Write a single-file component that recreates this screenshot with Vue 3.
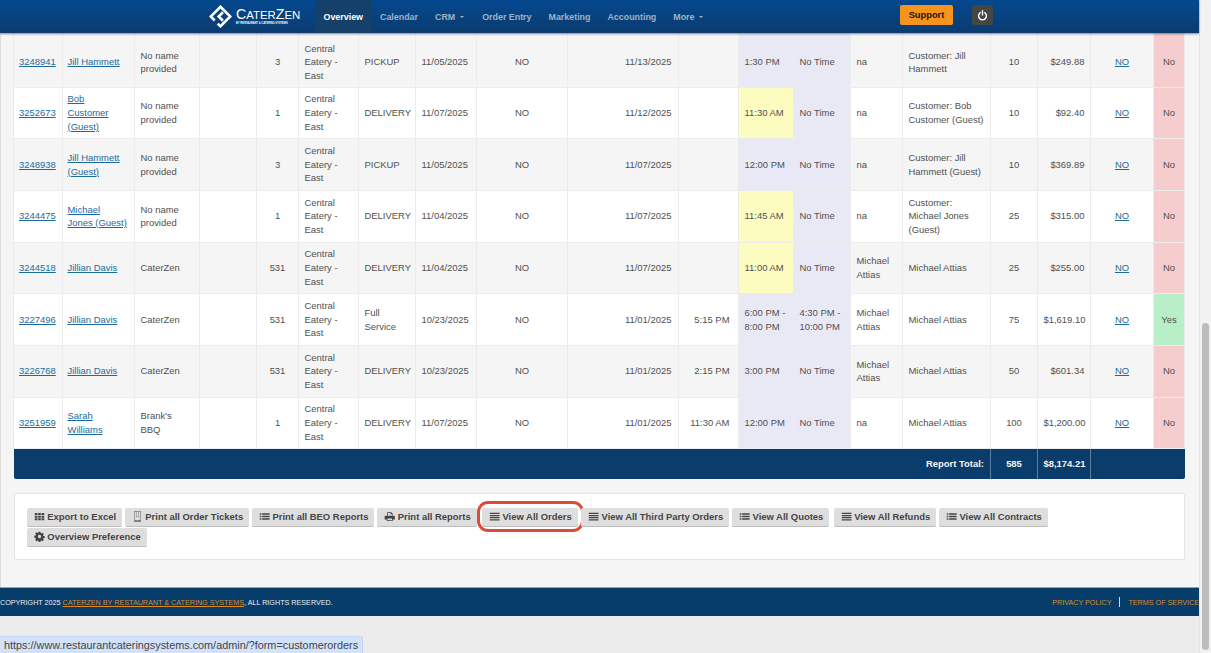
<script setup>
const icons = {
  th: 'M1 2.5h3.4v2.6H1zM5.3 2.5h3.4v2.6H5.3zM9.6 2.5H13v2.6H9.6zM1 5.9h3.4v2.6H1zM5.3 5.9h3.4v2.6H5.3zM9.6 5.9H13v2.6H9.6zM1 9.3h3.4v2.6H1zM5.3 9.3h3.4v2.6H5.3zM9.6 9.3H13v2.6H9.6z',
  tablet: 'M2.8 0h8.4v14H2.8zM3.6.8v10.6h6.8V.8zM6.2 12v1.2h1.6V12zM5 2h1.2v1.2H5zM7.8 2H9v1.2H7.8zM5 4.4h1.2v1.2H5zM7.8 4.4H9v1.2H7.8zM5 6.8h1.2V8H5zM7.8 6.8H9V8H7.8z',
  list: 'M1 3h2v1.8H1zM4 3h9.5v1.8H4zM1 6.1h2v1.8H1zM4 6.1h9.5v1.8H4zM1 9.2h2V11H1zM4 9.2h9.5V11H4z',
  bars: 'M1 2.3h12.4v1.6H1zM1 5h12.4v1.6H1zM1 7.7h12.4v1.6H1zM1 10.4h12.4V12H1z',
  print: 'M4 1.5h5.2L11 3.3v3H10V4H8.4V2.5H5v3.8H4zM1.8 6.2h11a1 1 0 0 1 1 1v3.6h-2.6v2H3.4v-2H.8V7.2a1 1 0 0 1 1-1zM4.4 9.6v2.2h5.8V9.6z',
  cog: 'M5.9 1h2.2l.3 1.7 1.1.5 1.4-1 1.6 1.6-1 1.4.5 1.1 1.7.3v2.2l-1.7.3-.5 1.1 1 1.4-1.6 1.6-1.4-1-1.1.5-.3 1.7H5.9l-.3-1.7-1.1-.5-1.4 1-1.6-1.6 1-1.4-.5-1.1L.3 8.1V5.9L2 5.6l.5-1.1-1-1.4 1.6-1.6 1.4 1 1.1-.5zM7 4.9a2.1 2.1 0 1 0 0 4.2 2.1 2.1 0 0 0 0-4.2z'
}

const navItems = [
  { label: 'Overview', active: true },
  { label: 'Calendar' },
  { label: 'CRM', caret: true },
  { label: 'Order Entry' },
  { label: 'Marketing' },
  { label: 'Accounting' },
  { label: 'More', caret: true }
]

const colWidths = [49, 72, 65, 57, 42, 60, 57, 61, 91, 111, 60, 55, 57, 52, 88, 47, 53, 63, 31]

const central = 'Central Eatery - East'
const rows = [
  { id: '3248941', name: 'Jill Hammett', company: 'No name provided', n: '3', type: 'PICKUP', d1: '11/05/2025', d2: '11/13/2025', t0: '', t1: '1:30 PM', t2: 'No Time', rep: 'na', by: 'Customer: Jill Hammett', qty: '10', total: '$249.88', flag: 'No' },
  { id: '3252673', name: 'Bob Customer (Guest)', company: 'No name provided', n: '1', type: 'DELIVERY', d1: '11/07/2025', d2: '11/12/2025', t0: '', t1: '11:30 AM', hot: true, t2: 'No Time', rep: 'na', by: 'Customer: Bob Customer (Guest)', qty: '10', total: '$92.40', flag: 'No' },
  { id: '3248938', name: 'Jill Hammett (Guest)', company: 'No name provided', n: '3', type: 'PICKUP', d1: '11/05/2025', d2: '11/07/2025', t0: '', t1: '12:00 PM', t2: 'No Time', rep: 'na', by: 'Customer: Jill Hammett (Guest)', qty: '10', total: '$369.89', flag: 'No' },
  { id: '3244475', name: 'Michael Jones (Guest)', company: 'No name provided', n: '1', type: 'DELIVERY', d1: '11/04/2025', d2: '11/07/2025', t0: '', t1: '11:45 AM', hot: true, t2: 'No Time', rep: 'na', by: 'Customer: Michael Jones (Guest)', qty: '25', total: '$315.00', flag: 'No' },
  { id: '3244518', name: 'Jillian Davis', company: 'CaterZen', n: '531', type: 'DELIVERY', d1: '11/04/2025', d2: '11/07/2025', t0: '', t1: '11:00 AM', hot: true, t2: 'No Time', rep: 'Michael Attias', by: 'Michael Attias', qty: '25', total: '$255.00', flag: 'No' },
  { id: '3227496', name: 'Jillian Davis', company: 'CaterZen', n: '531', type: 'Full Service', d1: '10/23/2025', d2: '11/01/2025', t0: '5:15 PM', t1: '6:00 PM - 8:00 PM', t2: '4:30 PM - 10:00 PM', rep: 'Michael Attias', by: 'Michael Attias', qty: '75', total: '$1,619.10', flag: 'Yes' },
  { id: '3226768', name: 'Jillian Davis', company: 'CaterZen', n: '531', type: 'DELIVERY', d1: '10/23/2025', d2: '11/01/2025', t0: '2:15 PM', t1: '3:00 PM', t2: 'No Time', rep: 'Michael Attias', by: 'Michael Attias', qty: '50', total: '$601.34', flag: 'No' },
  { id: '3251959', name: 'Sarah Williams', company: "Brank's BBQ", n: '1', type: 'DELIVERY', d1: '11/07/2025', d2: '11/01/2025', t0: '11:30 AM', t1: '12:00 PM', t2: 'No Time', rep: 'na', by: 'Michael Attias', qty: '100', total: '$1,200.00', flag: 'No' }
]

const buttons = [
  { label: 'Export to Excel', icon: 'th' },
  { label: 'Print all Order Tickets', icon: 'tablet', light: true },
  { label: 'Print all BEO Reports', icon: 'list' },
  { label: 'Print all Reports', icon: 'print' },
  { label: 'View All Orders', icon: 'bars', marked: true },
  { label: 'View All Third Party Orders', icon: 'bars' },
  { label: 'View All Quotes', icon: 'list' },
  { label: 'View All Refunds', icon: 'bars', spaced: true },
  { label: 'View All Contracts', icon: 'list' },
  { label: 'Overview Preference', icon: 'cog' }
]
</script>

<template>
  <div class="root">
    <div class="main">
      <header class="topbar">
        <div class="logo">
          <svg class="logo-mark" viewBox="0 0 24 24" width="23" height="23" fill="none" stroke="#fff" stroke-width="2.7">
            <path d="M9 19.5 L12 22.2 L22.2 12 L12 1.8 L1.8 12 L6 16.2" />
            <path d="M14.5 7.6 L10.1 12 L14.5 16.4" />
          </svg>
          <div class="logo-text">
            <div class="logo-name">C<small>ATER</small>Z<small>EN</small></div>
            <div class="logo-sub">BY RESTAURANT &amp; CATERING SYSTEMS</div>
          </div>
        </div>
        <nav class="nav">
          <a v-for="item in navItems" :key="item.label" class="nav-item" :class="{ active: item.active }">
            {{ item.label }}<i v-if="item.caret" class="caret"></i>
          </a>
        </nav>
        <button class="support">Support</button>
        <button class="power">
          <svg viewBox="0 0 14 14" width="11" height="11" fill="none" stroke="#fff" stroke-width="1.8" stroke-linecap="round">
            <path d="M4.2 3.4a5 5 0 1 0 5.6 0" />
            <path d="M7 1v5.4" />
          </svg>
        </button>
      </header>

      <section class="content">
        <table class="orders">
          <colgroup>
            <col v-for="(w, i) in colWidths" :key="i" :style="{ width: w + 'px' }" />
          </colgroup>
          <tbody>
            <tr v-for="(r, i) in rows" :key="r.id" :class="{ first: i === 0 }">
              <td class="id"><a class="link">{{ r.id }}</a></td>
              <td class="name"><a class="link">{{ r.name }}</a></td>
              <td>{{ r.company }}</td>
              <td></td>
              <td class="c">{{ r.n }}</td>
              <td>{{ central }}</td>
              <td>{{ r.type }}</td>
              <td>{{ r.d1 }}</td>
              <td class="c">NO</td>
              <td class="r d2">{{ r.d2 }}</td>
              <td class="r t0">{{ r.t0 }}</td>
              <td :class="r.hot ? 'hot' : 'lav'">{{ r.t1 }}</td>
              <td class="lav">{{ r.t2 }}</td>
              <td>{{ r.rep }}</td>
              <td>{{ r.by }}</td>
              <td class="c">{{ r.qty }}</td>
              <td class="r">{{ r.total }}</td>
              <td class="c"><a class="link">NO</a></td>
              <td class="c" :class="r.flag === 'Yes' ? 'yes' : 'no'">{{ r.flag }}</td>
            </tr>
          </tbody>
          <tfoot>
            <tr>
              <td colspan="15" class="r">Report Total:</td>
              <td class="c">585</td>
              <td class="r">$8,174.21</td>
              <td colspan="2" class="blank"></td>
            </tr>
          </tfoot>
        </table>

        <div class="panel">
          <button v-for="b in buttons" :key="b.label" class="btn" :class="{ marked: b.marked, spaced: b.spaced }">
            <svg viewBox="0 0 14 14" width="11" height="11" :fill="b.light ? '#777' : '#444'" fill-rule="evenodd"><path :d="icons[b.icon]" /></svg>
            {{ b.label }}
          </button>
        </div>
      </section>

      <footer class="footer">
        <span>COPYRIGHT 2025 <a class="orange under">CATERZEN BY RESTAURANT &amp; CATERING SYSTEMS</a>, ALL RIGHTS RESERVED.</span>
        <span class="legal"><a class="orange">PRIVACY POLICY</a><i></i><a class="orange">TERMS OF SERVICE</a></span>
      </footer>
      <div class="under-footer"></div>
    </div>

    <div class="scrollbar"><div class="thumb"></div></div>
    <div class="status">https://www.restaurantcateringsystems.com/admin/?form=customerorders</div>
  </div>
</template>

<style>
html, body { margin: 0; background: #ececec; overflow: hidden; }
</style>

<style scoped>
.root {
  position: relative;
  display: flex;
  width: 1211px;
  height: 653px;
  overflow: hidden;
  font-family: "Liberation Sans", Arial, sans-serif;
  color: #505050;
  background: #ececec;
}
.main { width: 1199px; display: flex; flex-direction: column; }

.topbar {
  height: 33px;
  flex: none;
  display: flex;
  align-items: center;
  padding-left: 209px;
  box-sizing: border-box;
  background: linear-gradient(#05488f, #0a3c70);
  box-shadow: 0 1px 2px rgba(0, 0, 0, .45);
  position: relative;
  z-index: 2;
}
.logo { display: flex; align-items: center; gap: 4px; width: 106px; flex: none; color: #fff; }
.logo-mark { flex: none; }
.logo-name { font-size: 14.2px; line-height: 14px; white-space: nowrap; }
.logo-name small { font-size: 11.4px; }
.logo-sub { font-size: 2.6px; line-height: 4px; white-space: nowrap; font-weight: 700; }

.nav { display: flex; height: 33px; width: 585px; flex: none; }
.nav-item {
  display: flex;
  align-items: center;
  padding: 0 8.5px;
  font-size: 8.9px;
  font-weight: 700;
  color: #9fb2c6;
  white-space: nowrap;
}
.nav-item.active { color: #fff; background: #15406a; }
.caret {
  display: inline-block;
  margin: 0 1px 0 5px;
  border-left: 2.5px solid transparent;
  border-right: 2.5px solid transparent;
  border-top: 2.5px solid #9fb2c6;
}

.support {
  width: 53px;
  height: 20px;
  margin-top: -3px;
  padding: 0;
  border: 0;
  border-radius: 2px;
  background: #f7941e;
  color: #1a1208;
  font: 700 9.3px "Liberation Sans", Arial, sans-serif;
}
.power {
  width: 21px;
  height: 20px;
  margin: -3px 0 0 19px;
  padding: 0;
  border: 0;
  border-radius: 2px;
  background: #454545;
  display: flex;
  align-items: center;
  justify-content: center;
}

.content {
  flex: none;
  height: 554px;
  box-sizing: border-box;
  padding: 0 13px;
  background: #f5f5f5;
  border-left: 1px solid #dcdcdc;
}
.orders {
  width: 1171px;
  margin-left: -1px;
  table-layout: fixed;
  border-collapse: collapse;
  font-size: 9.45px;
  line-height: 13.7px;
}
.orders td {
  height: 51.7px;
  box-sizing: border-box;
  padding: 0 5.5px;
  border: 1px solid #ececec;
  vertical-align: middle;
}
.orders td.id { padding-left: 5px; }
.orders td.name { padding-left: 4.5px; padding-right: 6.5px; }
.orders td.d2 { padding-right: 6.5px; }
.orders td.t0 { padding-right: 8.5px; }
.orders tbody tr { background: #fff; }
.orders tbody tr:nth-child(odd) { background: #f5f5f5; }
.orders tbody tr.first td { height: 54px; border-top: 0; padding-top: 5px; }
.orders .c { text-align: center; }
.orders .r { text-align: right; }
.orders .lav { background: #e9e9f6; }
.orders .hot { background: #fdfcc0; }
.orders .no { background: #f6cdce; }
.orders .yes { background: #b8efc6; }
.link { color: #1b6b9c; text-decoration: underline; }

.orders tfoot td {
  height: 30px;
  background: #0a3d6b;
  color: #f2f5f8;
  font-weight: 700;
  border: 0;
  border-left: 1px solid #5c7d9c;
}
.orders tfoot td:first-child { border-left: 0; border-bottom-left-radius: 2px; padding-right: 6px; }
.orders tfoot td.blank { border-bottom-right-radius: 2px; }

.panel {
  margin-top: 14px;
  width: 1171px;
  height: 67px;
  box-sizing: border-box;
  padding: 14px 60px 14px 12px;
  display: flex;
  flex-wrap: wrap;
  align-content: flex-start;
  gap: 1px 3px;
  background: #fff;
  border: 1px solid #e4e4e4;
  border-radius: 2px;
}
.btn {
  position: relative;
  height: 19px;
  padding: 0 6px 0 6.8px;
  border: 0;
  border-bottom: 1px solid #bdbdbd;
  border-radius: 2px;
  background: #dedede;
  color: #444;
  font: 700 9.45px "Liberation Sans", Arial, sans-serif;
  display: inline-flex;
  align-items: center;
  gap: 2.5px;
  white-space: nowrap;
}
.btn.marked { margin-left: 2.5px; padding-right: 6.5px; }
.btn.spaced { margin-left: 1.5px; }
.btn.marked::after {
  content: "";
  position: absolute;
  inset: -7px -6px -6px -5px;
  border: 3px solid #dd4a36;
  border-radius: 11px;
}

.footer {
  flex: none;
  height: 29px;
  box-sizing: border-box;
  display: flex;
  align-items: center;
  justify-content: space-between;
  background: #073d6b;
  border-top: 1px solid #8fa4b8;
  color: #e8edf2;
  font-size: 7.2px;
  white-space: nowrap;
  overflow: hidden;
}
.orange { color: #d98a25; }
.under { text-decoration: underline; }
.legal { display: flex; align-items: center; }
.legal i { width: 1px; height: 10px; margin: 0 8px; background: #cfd8e0; }
.under-footer { flex: 1; background: #ececec; }

.scrollbar {
  width: 12px;
  background: #f2f2f2;
  border-left: 1px solid #e4e4e4;
  box-sizing: border-box;
  padding: 323px 2px 3px 2px;
}
.thumb { height: 327px; border-radius: 4px; background: #bcbcbc; }

.status {
  position: absolute;
  left: 0;
  bottom: 0;
  width: 363px;
  height: 17px;
  box-sizing: border-box;
  padding: 0 4px;
  line-height: 16px;
  font-size: 10.85px;
  color: #444;
  background: #d3e2fb;
  border: 1px solid #c3d6f4;
  border-width: 1px 1px 0 0;
  border-top-right-radius: 3px;
  white-space: nowrap;
  overflow: hidden;
}
</style>
